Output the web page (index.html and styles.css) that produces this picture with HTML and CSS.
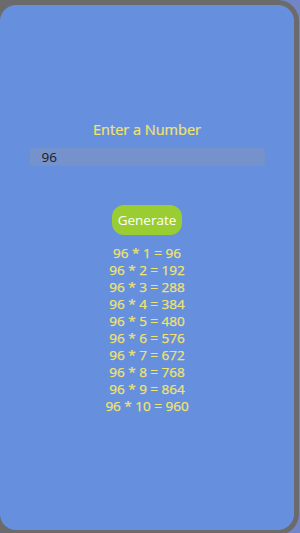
FILE: index.html
```html
<!DOCTYPE html>
<html lang="en">
<head>
    <meta charset="UTF-8">
    <meta name="viewport" content="width=device-width, initial-scale=1.0">
    <title>Multiplication Table</title>
    <link rel="stylesheet" href="styles.css">
</head>
<body>
  <div class="phone">
     <div class="box">
        <p class="label">Enter a Number</p>
        <input class="num" id="num" type="text" value="96">
        <button class="gen" id="gen">Generate</button>
        <div class="table" id="table">
           <p>96 * 1 = 96</p>
           <p>96 * 2 = 192</p>
           <p>96 * 3 = 288</p>
           <p>96 * 4 = 384</p>
           <p>96 * 5 = 480</p>
           <p>96 * 6 = 576</p>
           <p>96 * 7 = 672</p>
           <p>96 * 8 = 768</p>
           <p>96 * 9 = 864</p>
           <p>96 * 10 = 960</p>
        </div>
     </div>
  </div>
</body>
</html>
```

FILE: styles.css
```css
* {
  margin: 0;
  padding: 0;
  box-sizing: border-box;
  font-family: "Open Sans", "Noto Sans", sans-serif;
}

body {
  background-color: #7185c8;
  overflow: hidden;
}

/* gray frame, left edge cut off by the window */
.phone {
  width: 299px;
  height: 535px;
  padding: 5px 5px 5px 0;
  border-radius: 0 21px 21px 0;
  background-color: #6b6b6b;
}

.box {
  height: 100%;
  display: flex;
  flex-direction: column;
  align-items: center;
  justify-content: center;
  border-radius: 16px;
  background-color: #6690de;
}

.label {
  color: #f2e46c;
  font-size: 14.5px;
  line-height: 20px;
  margin-bottom: 8px;
  -webkit-text-stroke: 0.2px #f2e46c;
}

.num {
  width: 235px;
  height: 18px;
  border: none;
  outline: none;
  border-radius: 3px;
  background-color: #7592cc;
  color: #1a1a1a;
  font-size: 13.5px;
  padding-left: 12px;
}

.gen {
  margin-top: 39px;
  width: 70px;
  height: 30px;
  border: none;
  border-radius: 12px;
  background-color: #9acd32;
  color: #fff;
  font-size: 13.5px;
}

.table {
  margin-top: 10px;
  text-align: center;
  color: #f2e46c;
  font-size: 13.5px;
  line-height: 17px;
  -webkit-text-stroke: 0.25px #f2e46c;
}
```
